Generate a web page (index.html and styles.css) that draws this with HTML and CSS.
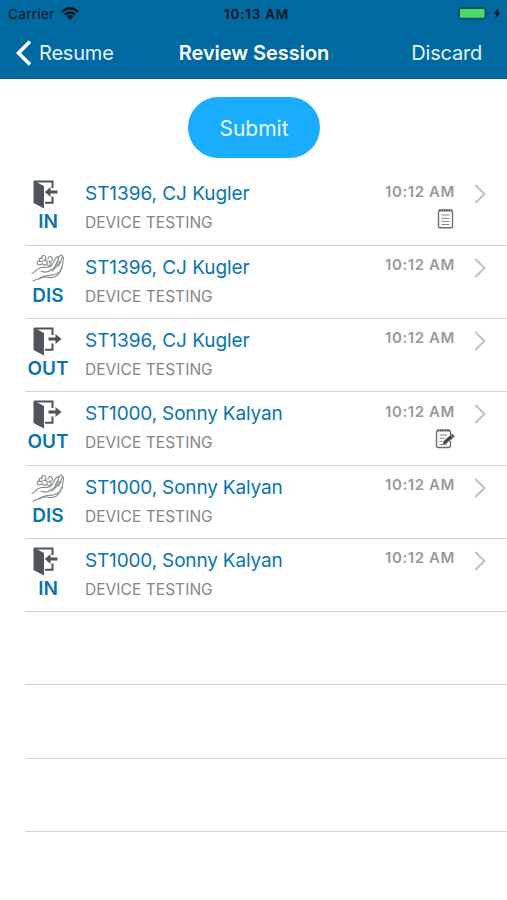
FILE: index.html
```html
<!DOCTYPE html>
<html lang="en">
<head>
<meta charset="utf-8">
<title>Review Session</title>
<link rel="stylesheet" href="styles.css">
</head>
<body>
<svg class="defs" aria-hidden="true">
  <defs>
    <symbol id="door" viewBox="0 0 26 30">
      <path d="M1.5 1.5H19.5V8M19.5 16.5V22.7H12" fill="none" stroke="#50555a" stroke-width="2"/>
      <path d="M.5 .6L11 6V28.5L.5 23Z" fill="#50555a"/>
    </symbol>
    <symbol id="in" viewBox="0 0 26 30">
      <use href="#door"/>
      <path d="M11.8 12L17.5 7V10.5H24.5V13.5H17.5V17Z" fill="#50555a"/>
    </symbol>
    <symbol id="out" viewBox="0 0 30 30">
      <use href="#door" width="26" height="30"/>
      <path d="M28.5 12L22.5 7V10.5H15.5V13.5H22.5V17Z" fill="#50555a"/>
    </symbol>
    <symbol id="dis" viewBox="0 0 34 29">
      <g fill="none" stroke="#858b8e" stroke-width="1.1" stroke-linecap="round" stroke-linejoin="round">
        <path d="M1 19.5C4 18.5 6 14 10 13.5C14 13 17 14.5 20 12L25 4C27 1.5 28.5 3 27.5 5L24.5 11M27 4L29 1.5C31 0 32 2 31 4L27.5 12M31 3C33 2 32.5 5 32 8C31.5 14 29 20 22 21C16 21.5 12 21.5 8 25M10 17C14 19 18 18 21 15"/>
        <path d="M2 27C6 25.5 10 22.5 15 23C21 24.5 26 23 29 18L31.5 13M22 15L28 7M21 17L30 8"/>
        <path d="M8 11C5 10 6 6 9 7.5C7 4 10 3 11 5C10 1 14 .5 14.5 3C16 5 14 6 13 6.5C16 6 17 8 16 10C14 12 11 11 11 8.5M17 5C17 2 20 1.5 21 4C23 6 20 8 18 7M18 8C20 8 21 10 19 11.5L16 11M8 11L11 10M9 7.5L12 7"/>
      </g>
    </symbol>
    <symbol id="note" viewBox="0 0 20 22">
      <rect x="3.5" y="2.5" width="14" height="17.3" rx="1.5" fill="none" stroke="#6c7274" stroke-width="1.4"/>
      <path d="M4 2.2H17" stroke="#666c6e" stroke-width="2.5" stroke-dasharray="1.6 .8"/>
      <path d="M6.5 7H14.5M6.5 10.3H14.5M6.5 13.4H14.5M6.5 16.5H14.5" stroke="#858a8b" stroke-width="1"/>
    </symbol>
    <symbol id="edit" viewBox="0 0 20 22">
      <path d="M15.5 7V4.5Q15.5 2.5 13.5 2.5H3.5Q1.5 2.5 1.5 4.5V17.5Q1.5 19.5 3.5 19.5H13.5Q15.5 19.5 15.5 17.5V13" fill="none" stroke="#6c7274" stroke-width="1.4"/>
      <path d="M2.5 2.2H15" stroke="#666c6e" stroke-width="2.5" stroke-dasharray="1.6 .8"/>
      <path d="M4.5 7H12M4.5 10.3H9.5M4.5 13.4H7.5M4.5 16.6H12" stroke="#858a8b" stroke-width="1"/>
      <path d="M7.5 16.6L9 12.8L17 5.8L19.8 8.6L11.3 15.6Z" fill="#44494b"/>
      <path d="M15.6 7L18.4 9.9" stroke="#fff" stroke-width=".6"/>
    </symbol>
    <symbol id="chevron" viewBox="0 0 12 20">
      <path d="M1.3 1L10.5 10L1.3 19" fill="none" stroke="#c2c2c4" stroke-width="2"/>
    </symbol>
  </defs>
</svg>

<header class="top">
  <div class="status">
    <div class="carrier"><span>Carrier</span>
      <svg class="wifi" viewBox="0 0 18 13"><path d="M1 4.8Q9-2.3 17 4.8M3.8 7.7Q9 3.2 14.2 7.7" fill="none" stroke="#05131b" stroke-width="2.3"/><path d="M5.8 9.3Q9 6.8 12.2 9.3L9 12.7Z" fill="#05131b"/></svg>
    </div>
    <div class="clock">10:13 AM</div>
    <div class="power">
      <svg class="battery" viewBox="0 0 33 13"><rect x=".7" y=".7" width="27" height="11.4" rx="2.5" fill="#08577e" stroke="#044466"/><rect x="2" y="2" width="24.5" height="8.8" rx="1" fill="#4cd964"/><path d="M29.4 4.4Q32 6.4 29.4 8.4Z" fill="#044466"/></svg>
      <svg class="bolt" viewBox="0 0 8 11"><path d="M5.2 0L.5 6H3.5L2.2 11L7.5 4.5H4.5Z" fill="#05131b"/></svg>
    </div>
  </div>
  <nav class="nav">
    <a class="back"><svg class="arrow" viewBox="0 0 16 26"><path d="M14 1.5L2.5 13L14 24.5" fill="none" stroke="#fff" stroke-width="3.6"/></svg><span>Resume</span></a>
    <h1>Review Session</h1>
    <a class="discard">Discard</a>
  </nav>
</header>

<main>
  <div class="action"><button class="submit">Submit</button></div>
  <ul class="list">
    <li class="row">
      <div class="kind"><svg class="door-in"><use href="#in"/></svg><b>IN</b></div>
      <div class="info"><div class="name">ST1396, CJ Kugler</div><div class="task">DEVICE TESTING</div></div>
      <div class="meta"><time>10:12 AM</time><svg class="memo"><use href="#note"/></svg></div>
      <svg class="chevron"><use href="#chevron"/></svg>
    </li>
    <li class="row">
      <div class="kind"><svg class="hands"><use href="#dis"/></svg><b>DIS</b></div>
      <div class="info"><div class="name">ST1396, CJ Kugler</div><div class="task">DEVICE TESTING</div></div>
      <div class="meta"><time>10:12 AM</time></div>
      <svg class="chevron"><use href="#chevron"/></svg>
    </li>
    <li class="row">
      <div class="kind"><svg class="door-out"><use href="#out"/></svg><b>OUT</b></div>
      <div class="info"><div class="name">ST1396, CJ Kugler</div><div class="task">DEVICE TESTING</div></div>
      <div class="meta"><time>10:12 AM</time></div>
      <svg class="chevron"><use href="#chevron"/></svg>
    </li>
    <li class="row">
      <div class="kind"><svg class="door-out"><use href="#out"/></svg><b>OUT</b></div>
      <div class="info"><div class="name long">ST1000, Sonny Kalyan</div><div class="task">DEVICE TESTING</div></div>
      <div class="meta"><time>10:12 AM</time><svg class="memo"><use href="#edit"/></svg></div>
      <svg class="chevron"><use href="#chevron"/></svg>
    </li>
    <li class="row">
      <div class="kind"><svg class="hands"><use href="#dis"/></svg><b>DIS</b></div>
      <div class="info"><div class="name long">ST1000, Sonny Kalyan</div><div class="task">DEVICE TESTING</div></div>
      <div class="meta"><time>10:12 AM</time></div>
      <svg class="chevron"><use href="#chevron"/></svg>
    </li>
    <li class="row">
      <div class="kind"><svg class="door-in"><use href="#in"/></svg><b>IN</b></div>
      <div class="info"><div class="name long">ST1000, Sonny Kalyan</div><div class="task">DEVICE TESTING</div></div>
      <div class="meta"><time>10:12 AM</time></div>
      <svg class="chevron"><use href="#chevron"/></svg>
    </li>
    <li class="row"></li>
    <li class="row"></li>
    <li class="row"></li>
  </ul>
</main>
</body>
</html>
```
FILE: styles.css
```css
* { box-sizing: border-box; }
body { margin: 0; height: 900px; overflow: hidden; background: #fff; font-family: Inter, "Liberation Sans", sans-serif; }
svg { display: block; flex: none; }
.defs { position: absolute; width: 0; height: 0; }

.top { height: 79px; background: #00699f; border-bottom: 1px solid #005f91; }
.status { display: grid; grid-template-columns: 1fr auto 1fr; align-items: center; height: 27px; padding: 0 6px 0 8px; color: #05131b; font-size: 13px; }
.carrier { display: flex; align-items: center; gap: 6px; font-size: 13.5px; letter-spacing: .35px; }
.wifi { width: 18px; height: 13px; }
.clock { font-size: 13.5px; font-weight: 600; letter-spacing: .75px; padding-left: 4px; }
.power { display: flex; align-items: center; justify-content: flex-end; gap: 2px; }
.battery { width: 33px; height: 13px; }
.bolt { width: 8px; height: 11px; }
.nav { display: grid; grid-template-columns: 1fr auto 1fr; align-items: center; height: 51px; padding: 0 25px 0 16px; color: #fff; font-size: 20px; }
.back { display: flex; align-items: center; gap: 7px; }
.back, .discard { color: #e2f3fc; letter-spacing: -.2px; }
.arrow { width: 16px; height: 26px; }
.nav h1 { margin: 0; font-size: 20px; font-weight: 600; padding-left: 10px; letter-spacing: -.03px; }
.discard { text-align: right; }

.action { display: flex; justify-content: center; height: 93.4px; padding: 18px 0 0 1px; }
.submit { width: 132px; height: 61px; padding: 1px 0 0; border: 0; border-radius: 31px; background: #1badfd; color: #e9f8ff; font: 400 21px Inter, "Liberation Sans", sans-serif; }

.list { margin: 0 0 0 25px; padding: 0; list-style: none; }
.row { display: flex; height: 73.3px; border-bottom: 1.5px solid #d4d4d6; }
.kind { display: flex; flex-direction: column; align-items: center; width: 46px; padding-top: 8px; color: #0875ad; }
.kind b { font-size: 19px; font-weight: 600; line-height: 24px; }
.kind svg { height: 30px; }
.door-in { width: 26px; margin-left: -4px; }
.door-out { width: 30px; }
.kind .hands { width: 34px; height: 29px; margin-bottom: 1px; }
.info { flex: 1; padding: 8px 0 0 14px; }
.name { color: #0875ad; font-size: 19px; line-height: 28px; letter-spacing: -.05px; white-space: nowrap; }
.long { letter-spacing: -.17px; }
.task { color: #858587; font-size: 15.5px; line-height: 29px; letter-spacing: .05px; white-space: nowrap; }
.meta { display: flex; flex-direction: column; align-items: flex-end; width: 90px; padding-top: 7.5px; }
.meta time { color: #99999b; font-size: 15px; font-weight: 600; line-height: 24px; letter-spacing: .6px; white-space: nowrap; }
.memo { width: 20px; height: 22px; margin-top: 4px; }
.chevron { width: 12px; height: 20px; margin: 12px 21px 0 19px; }
```
